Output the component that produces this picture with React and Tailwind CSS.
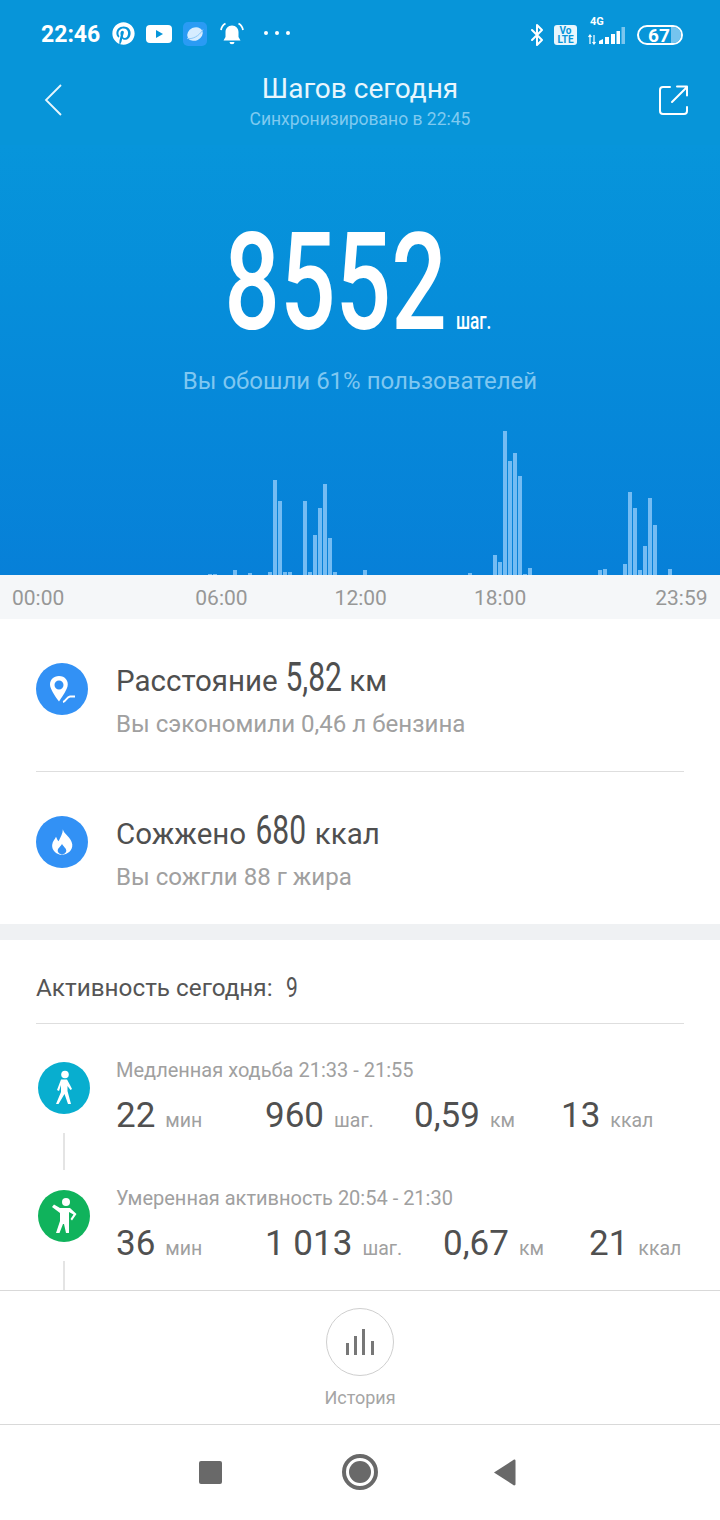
import React from "react";
import { FaPinterest } from "react-icons/fa";
import { Bluetooth } from "lucide-react";

const bars = {41:1,42:1,46:5,49:2,53:3,54:95,55:74,56:3,57:3,60:74,61:3,62:40,63:67,64:91,65:37,66:3,72:5,93:2,98:20,99:13,100:144,101:114,102:122,103:99,104:1,105:7,119:5,120:6,124:11,125:83,126:67,127:5,128:29,129:77,130:50,133:6};
const slots = Array.from({ length: 143 }, (_, i) => bars[i] || 0);

function Cond({ w, size, scale = "scale-x-[.75]", weight = "font-normal", children, className = "" }) {
  return (
    <span className={`inline-flex justify-center whitespace-nowrap ${className}`} style={{ width: w }}>
      <span className={`shrink-0 ${weight} ${scale}`} style={{ fontSize: size }}>{children}</span>
    </span>
  );
}

function StatusBar() {
  return (
    <div className="h-[60px] pl-[41px] pr-[37px] flex items-center text-white">
      <span className="text-[23px] font-bold leading-none w-[59px] mt-[8px]">22:46</span>
      <FaPinterest className="ml-[12px] mt-[7px] text-[23px]" />
      <svg className="ml-[11px] mt-[7px]" width="26" height="18" viewBox="0 0 26 18"><rect width="26" height="18" rx="4" fill="#fff" /><path d="M10 5l7 4-7 4z" fill="#0795d9" /></svg>
      <svg className="ml-[11px] mt-[7px]" width="24" height="24" viewBox="0 0 24 24"><rect width="24" height="24" rx="5" fill="#2a9bf4" /><ellipse cx="12" cy="12" rx="8" ry="6.500" fill="#d6ecff" transform="rotate(-25 12 12)" /><path d="M4 16.500c5 1 12-2 16-9" stroke="#8cc8f8" strokeWidth="1" fill="none" /></svg>
      <svg className="ml-[13px] mt-[7px]" width="24" height="24" viewBox="0 0 24 24" fill="#fff"><path d="M12 3.500c-4 0-6.500 3-6.500 6.500v5L3.500 18.500h17L18.500 15v-5c0-3.500-2.500-6.500-6.500-6.500z" /><path d="M9.500 20h5a2.500 2.200 0 01-5 0z" /><path d="M5.500 1.500A9 9 0 001 8M18.500 1.500A9 9 0 0123 8" stroke="#fff" strokeWidth="1.800" fill="none" /></svg>
      <span className="ml-[20px] mt-[5px] flex gap-[7px]"><i className="size-[4px] rounded-full bg-white" /><i className="size-[4px] rounded-full bg-white" /><i className="size-[4px] rounded-full bg-white" /></span>
      <Bluetooth className="ml-auto mt-[10px] mr-[-2px]" size={24} strokeWidth={2} />
      <span className="ml-[7px] mt-[10px] w-[23px] h-[20px] bg-[#e8f6fd] rounded-[3px] flex flex-col items-center justify-center text-[#0795d9] text-[10px] font-bold leading-[9px]"><span>Vo</span><span>LTE</span></span>
      <span className="relative ml-[11px] mt-[2px] w-[38px] h-[26px]">
        <span className="absolute left-[2px] top-[-2px] text-[11px] font-bold leading-[12px]">4G</span>
        <svg className="absolute left-0 top-[8px]" width="38" height="20" viewBox="0 0 38 20"><path d="M2 18V9M0.500 11L2 9l1.500 2M6 9v9M4.500 16L6 18l1.500-2" stroke="#fff" strokeWidth="1.200" fill="none" /><path d="M11 15l4-2v5h-4zM17 11h4v7h-4zM23 8h4v10h-4z" fill="#fff" /><path d="M28.500 5h3.500v13h-3.500z" fill="#fff" /><path d="M33.500 1h3.500v17h-3.500z" fill="#7cc6ee" /></svg>
      </span>
      <span className="relative ml-[11px] mt-[10px] w-[46px] h-[20px] rounded-full border-2 border-white overflow-hidden flex items-center">
        <span className="h-full w-[32px]" />
        <span className="h-full flex-1 bg-[#75c4ef]" />
        <span className="absolute inset-0 flex items-center justify-center text-[19px] font-bold leading-none -ml-[2px]">67</span>
      </span>
    </div>
  );
}

function StatRow({ title, vals, dot, icon }) {
  return (
    <div className="flex h-[128px]">
      <div className="w-[80px] pl-[2px] pt-[10px] flex flex-col">
        <div className="size-[52px] rounded-full flex items-center justify-center" style={{ background: dot }}>{icon}</div>
        <div className="w-[2px] h-[37px] bg-[#e4e4e4] ml-[25px] mt-[19px]" />
      </div>
      <div className="flex-1">
        <div className="text-[20px] leading-[22px] text-[#a0a0a0] mt-[7px]">{title}</div>
        <div className="flex items-baseline mt-[14px] whitespace-nowrap">
          {vals.map(([v, u, w], i) => (
            <span key={i} className="flex items-baseline shrink-0" style={{ width: w }}>
              <span className="text-[35px] leading-[42px] text-[#505050]">{v}</span>
              <span className="text-[19.500px] text-[#a0a0a0] ml-[10px]">{u}</span>
            </span>
          ))}
        </div>
      </div>
    </div>
  );
}

const Walk = (
  <svg width="24" height="36" viewBox="0 0 24 36" fill="#fff"><circle cx="13" cy="4.500" r="3.800" /><path d="M9 9.500h6l3 5.500 2 4-1.500 1-3-4v5l3.500 13h-3l-3.500-10-6 10H4l5-12v-7l-2 6-2-1z" /></svg>
);
const Stretch = (
  <svg width="32" height="38" viewBox="0 0 32 38" fill="#fff"><circle cx="18" cy="5" r="4" /><path d="M4 10l2-2.500 6 3.500h10l6.500 6-4.500 6.500-1.500-1.500 3-4.500-4.500-2.500v21h-3l-2-9h-1l-3.500 9H8l4-12v-8z" /></svg>
);

export default function App() {
  return (
    <div className="w-[720px] h-[1520px] overflow-hidden bg-white flex flex-col" style={{ fontFamily: "Roboto, sans-serif" }}>
      <div className="flex-1 min-h-0 overflow-hidden">
        <div className="h-[145px] bg-[#0795d9]">
          <StatusBar />
          <div className="relative flex flex-col items-center text-center">
            <svg className="absolute left-[44px] top-[24px]" width="18" height="32" viewBox="0 0 18 32" fill="none" stroke="#e8f6fd" strokeWidth="1.800"><path d="M17 1L2 16l15 15" /></svg>
            <svg className="absolute left-[659px] top-[25px]" width="30" height="30" viewBox="0 0 30 30" fill="none" stroke="#fff" strokeWidth="2" strokeLinecap="round" strokeLinejoin="round"><path d="M11 2H4a3 3 0 00-3 3v21a3 3 0 003 3h21a3 3 0 003-3v-4" /><path d="M13 17L28 2M18 1.500h10v9" /></svg>
            <div className="text-[28px] leading-[36px] mt-[11px] text-[#e8f6fd]">Шагов сегодня</div>
            <div className="text-[17.500px] leading-[24px] text-[#7fcaf0]">Синхронизировано в 22:45</div>
          </div>
        </div>
        <div className="h-[430px] bg-gradient-to-b from-[#0795db] to-[#0780d8] flex flex-col items-center relative">
          <div className="h-[200px] flex items-baseline text-white mt-[38px]">
            <Cond w={215} size={136} scale="scale-x-[.72]" weight="font-medium" className="leading-[200px]">8552</Cond>
            <Cond w={36} size={23} weight="font-medium" className="ml-[12px]">шаг.</Cond>
          </div>
          <div className="text-[24px] leading-[28px] text-[#7fc7f1] -mt-[16px]">Вы обошли 61% пользователей</div>
          <div className="absolute bottom-0 left-0 w-full h-[150px] pl-[3px] flex items-end">
            {slots.map((h, i) => (
              <div key={i} className="w-[5px] pr-[1px] shrink-0">
                <div className="bg-[#74bcf3]" style={{ height: h }} />
              </div>
            ))}
          </div>
        </div>
        <div className="h-[44px] bg-[#f5f7f9] flex items-center pl-[12px] pt-[4px] text-[21px] text-[#979797]">
          <span>00:00</span><span className="ml-[131px]">06:00</span><span className="ml-[87px]">12:00</span><span className="ml-[87px]">18:00</span><span className="ml-[129px]">23:59</span>
        </div>
        <div className="px-[36px]">
          <div className="h-[153px] flex items-center border-b border-[#dedede]">
            <div className="size-[52px] rounded-full bg-[#3291f5] flex items-center justify-center mr-[28px] -mt-[12px]">
              <svg width="36" height="36" viewBox="0 0 36 36" fill="#fff"><path fillRule="evenodd" d="M15 5c-5.500 0-9 4-9 8.500 0 4 4.500 11 9 17 2-3 7-10 8.500-15C25 10 21 5 15 5zm0 4.500a4.500 4.500 0 110 9 4.500 4.500 0 010-9z" /><path d="M19 31c3-.5 3.500-5 7-5.500h5" stroke="#fff" strokeWidth="1.800" fill="none" /></svg>
            </div>
            <div className="mt-[4px]">
              <div className="text-[29.500px] leading-[44px] text-[#4f4f4f] whitespace-nowrap">Расстояние <Cond w={57} size={40}>5,82</Cond> км</div>
              <div className="text-[24.100px] leading-[28px] text-[#a0a0a0] mt-[7px]">Вы сэкономили 0,46 л бензина</div>
            </div>
          </div>
          <div className="h-[152px] flex items-center">
            <div className="size-[52px] rounded-full bg-[#3291f5] flex items-center justify-center mr-[28px] -mt-[12px]">
              <svg width="24" height="28" viewBox="0 0 28 32" fill="#fff"><path fillRule="evenodd" d="M15 1c1 6 10 9 11 18 .5 7-6 12-12 12S2 26 2.500 19.500C3 15 6 13 7 10c1 2 1.500 4 3 5 2-4 5-9 5-14zm-1 17c-1 3-5 5-5 8 0 3 3 4.500 5 4.500s5-1.500 5-4.500c0-3-4-5-5-8z" /></svg>
            </div>
            <div className="mt-[3px]">
              <div className="text-[29.500px] leading-[44px] text-[#4f4f4f] whitespace-nowrap">Сожжено <Cond w={54} size={40}>680</Cond> ккал</div>
              <div className="text-[24.100px] leading-[28px] text-[#a0a0a0] mt-[7px]">Вы сожгли 88 г жира</div>
            </div>
          </div>
        </div>
        <div className="h-[16px] bg-[#eff1f3]" />
        <div className="px-[36px]">
          <div className="h-[84px] flex items-center border-b border-[#dedede] pt-[13px] text-[24.300px] text-[#555] whitespace-nowrap">
            Активность сегодня:<Cond w={12} size={28} className="ml-[13px]">9</Cond>
          </div>
          <div className="mt-[28px]">
            <StatRow title="Медленная ходьба 21:33 - 21:55" dot="#08aecf" icon={Walk}
              vals={[["22", "мин", 149], ["960", "шаг.", 149], ["0,59", "км", 147], ["13", "ккал"]]} />
            <StatRow title="Умеренная активность 20:54 - 21:30" dot="#10b35c" icon={Stretch}
              vals={[["36", "мин", 149], ["1 013", "шаг.", 178], ["0,67", "км", 146], ["21", "ккал"]]} />
          </div>
        </div>
      </div>
      <div className="h-[135px] shrink-0 border-t border-b border-[#d9d9d9] bg-white flex flex-col items-center">
        <div className="size-[68px] rounded-full border border-[#cfcfcf] mt-[17px] flex items-center justify-center">
          <svg width="28" height="26" viewBox="0 0 28 26" fill="#777"><rect x="0" y="14" width="3" height="12" /><rect x="8" y="7" width="3" height="19" /><rect x="16" y="0" width="3" height="26" /><rect x="25" y="12" width="3" height="14" /></svg>
        </div>
        <div className="text-[18px] leading-[20px] mt-[12px] text-[#a5a5a5]">История</div>
      </div>
      <div className="h-[95px] shrink-0 bg-white flex items-center pb-[1px]">
        <div className="ml-[199px] size-[23px] rounded-[2px] bg-[#696969]" />
        <div className="ml-[120px] size-[36px] rounded-full border-[4px] border-[#696969] bg-white flex items-center justify-center"><div className="size-[22px] rounded-full bg-[#696969]" /></div>
        <svg className="ml-[115px]" width="23" height="27" viewBox="0 0 24 28" fill="#696969"><path d="M22 0.500c1 0 1.500 .5 1.500 1.500v24c0 1-.5 1.500-1.500 1.500L1 14z" /></svg>
      </div>
    </div>
  );
}
